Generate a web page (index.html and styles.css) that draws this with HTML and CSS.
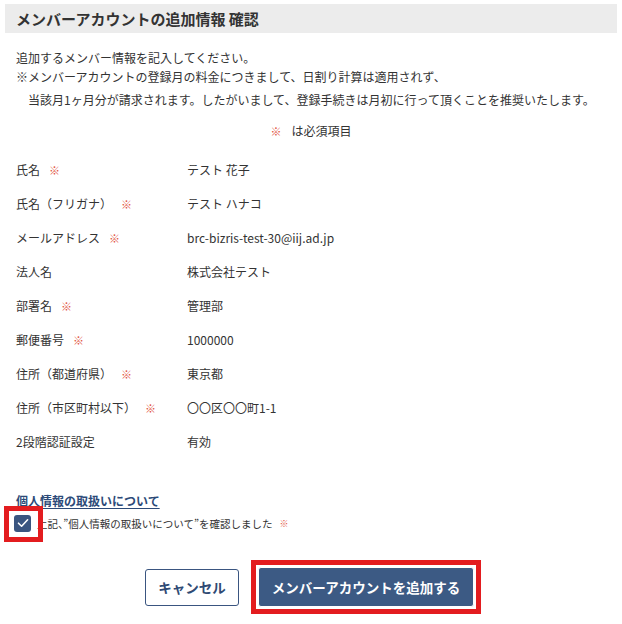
FILE: index.html
```html
<!DOCTYPE html>
<html lang="ja">
<head>
<meta charset="utf-8">
<title>メンバーアカウントの追加情報 確認</title>
<link rel="stylesheet" href="styles.css">
</head>
<body>
<div class="page">
  <h1 class="title">メンバーアカウントの追加情報 確認</h1>

  <div class="intro">
    <p class="intro-line">追加するメンバー情報を記入してください。</p>
    <p class="intro-line">※メンバーアカウントの登録月の料金につきまして、日割り計算は適用されず、</p>
    <p class="intro-line indent">当該月1ヶ月分が請求されます。したがいまして、登録手続きは月初に行って頂くことを推奨いたします。</p>
  </div>

  <p class="required-note"><span class="req">※</span>は必須項目</p>

  <dl class="fields">
    <div class="row"><dt>氏名<span class="req">※</span></dt><dd>テスト 花子</dd></div>
    <div class="row"><dt>氏名（フリガナ）<span class="req">※</span></dt><dd>テスト ハナコ</dd></div>
    <div class="row"><dt>メールアドレス<span class="req">※</span></dt><dd>brc-bizris-test-30@iij.ad.jp</dd></div>
    <div class="row"><dt>法人名</dt><dd>株式会社テスト</dd></div>
    <div class="row"><dt>部署名<span class="req">※</span></dt><dd>管理部</dd></div>
    <div class="row"><dt>郵便番号<span class="req">※</span></dt><dd>1000000</dd></div>
    <div class="row"><dt>住所（都道府県）<span class="req">※</span></dt><dd>東京都</dd></div>
    <div class="row"><dt>住所（市区町村以下）<span class="req">※</span></dt><dd>〇〇区〇〇町1-1</dd></div>
    <div class="row"><dt>2段階認証設定</dt><dd>有効</dd></div>
  </dl>

  <section class="privacy">
    <a class="privacy-link" href="#">個人情報の取扱いについて</a>
    <label class="agree">
      <span class="checkbox">
        <svg viewBox="0 0 16 16" width="16" height="16"><path d="M3.5 8.2 6.6 11.2 12.6 4.8" fill="none" stroke="#fff" stroke-width="1.6" stroke-linecap="round" stroke-linejoin="round"/></svg>
        <span class="highlight-box"></span>
      </span>
      <span class="agree-text">上記、”個人情報の取扱いについて”を確認しました</span><span class="req small">※</span>
    </label>
  </section>

  <div class="actions">
    <button class="btn btn-cancel" type="button">キャンセル</button>
    <span class="highlight">
      <button class="btn btn-primary" type="button">メンバーアカウントを追加する</button>
    </span>
  </div>
</div>
</body>
</html>
```

FILE: styles.css
```css
* {
  box-sizing: border-box;
}

body {
  margin: 0;
  background: #fff;
  color: #333;
  font-family: "Noto Sans CJK JP", "Noto Sans", sans-serif;
}

.page {
  padding: 4px 5px 0;
}

.title {
  margin: 0;
  height: 29px;
  padding-left: 11px;
  background: #ececec;
  font-size: 15px;
  font-weight: 700;
  line-height: 29px;
  color: #333;
}

.intro {
  margin-top: 15px;
  padding-left: 11px;
  font-size: 12px;
}

.intro-line {
  margin: 0;
  line-height: 19px;
}

.intro-line.indent {
  padding-left: 12px;
  margin-top: 4px;
}

.required-note {
  margin: 13px 0 0;
  text-align: center;
  font-size: 12px;
  line-height: 18px;
}

.required-note .req {
  margin: 0 10px 0 0;
}

.req {
  color: #e2553f;
  font-size: 11px;
  margin-left: 9px;
}

.req.small {
  font-size: 9px;
  margin-left: 7px;
}

.fields {
  margin: 12px 0 0;
  padding-left: 11px;
  font-size: 12px;
}

.row {
  display: grid;
  grid-template-columns: 171px 1fr;
  height: 34px;
  align-items: center;
}

.row dt,
.row dd {
  margin: 0;
}

.privacy {
  margin-top: 29px;
  padding-left: 11px;
}

.privacy-link {
  display: inline-block;
  font-size: 12px;
  font-weight: 700;
  color: #2c4a78;
  line-height: 18px;
  text-decoration: underline;
  text-underline-offset: 2px;
}

.agree {
  display: flex;
  align-items: center;
  height: 36px;
  margin-top: -6px;
  font-size: 10.5px;
}

.checkbox {
  position: relative;
  display: flex;
  align-items: center;
  justify-content: center;
  flex: none;
  width: 17px;
  height: 17px;
  margin-left: -2px;
  border-radius: 3px;
  background: #3a5580;
}

/* red callout frame drawn over the checkbox */
.highlight-box {
  position: absolute;
  left: -10px;
  top: -9px;
  width: 39px;
  height: 36px;
  border: 5px solid #e31c1f;
}

.agree-text {
  margin-left: 6px;
}

.actions {
  display: flex;
  justify-content: center;
  align-items: center;
  gap: 12px;
  margin-top: 19px;
  padding-left: 4px;
}

.btn {
  font-family: inherit;
  font-weight: 700;
  border-radius: 3px;
  cursor: pointer;
}

.btn-cancel {
  width: 94px;
  height: 37px;
  border: 1px solid #3a5580;
  background: #fff;
  color: #2f4a74;
  font-size: 13.5px;
}

.highlight {
  display: inline-flex;
  padding: 2px;
  border: 5px solid #e31c1f;
}

.btn-primary {
  width: 216px;
  height: 40px;
  border: 1px solid #fff;
  background: #3c5a84;
  color: #fff;
  font-size: 13.5px;
}
```
